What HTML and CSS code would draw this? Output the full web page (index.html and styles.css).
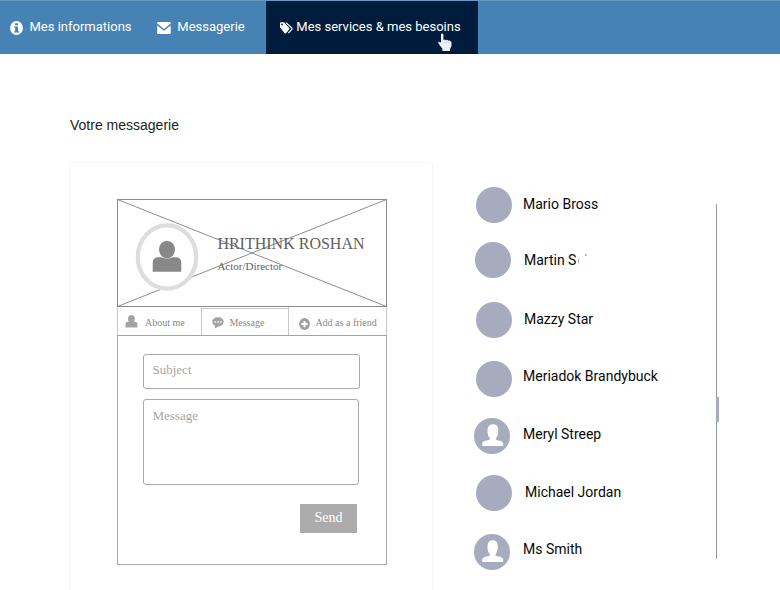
FILE: index.html
```html
<!DOCTYPE html>
<html lang="fr">
<head>
<meta charset="utf-8">
<title>Votre messagerie</title>
<link rel="stylesheet" href="styles.css">
</head>
<body>
<nav class="nav">
  <a class="tab tab-info"><svg width="13" height="14" viewBox="0 0 13 14"><ellipse cx="6.5" cy="7" rx="6.4" ry="7" fill="#fff"/><path d="M5 2.3h3v2H5zM4.2 5.4H8v4.8h1v1.4H4.2v-1.4h1V6.8h-1z" fill="#4682b4"/></svg><span>Mes informations</span></a>
  <a class="tab tab-mail"><svg width="14" height="12" viewBox="0 0 14 12"><path d="M.2 0h13.5v1.5L7 7 .2 1.5zM.2 3.4 7 8.8l6.7-5.4V12H.2z" fill="#fff"/></svg><span>Messagerie</span></a>
  <a class="tab tab-services"><svg width="13" height="12" viewBox="0 0 13 12"><path d="M0 1.2Q0 .2 1 .2H4L9.2 6q.6.7 0 1.4L6 11.2q-.7.6-1.4 0L0 5.3z" fill="#fff"/><circle cx="2" cy="2.4" r=".9" fill="#001c3d"/><path d="M6 .6 11.8 6q.7.8 0 1.500L8.400 11.200" fill="none" stroke="#fff" stroke-width="1.100"/></svg><span>Mes services &amp; mes besoins</span>
    <svg class="cursor" width="14" height="19" viewBox="0 0 14 19"><path d="M3 1.200Q4.200-.4 5.400 1.200V7l1.200-.6 1.400.8 1.300-.5 1.300 1 1.200-.1 1.700 1.500v4l-1.500 3V18H4.400v-2.200L.4 10.500V8.600l2.600.8z" fill="#edf0f4"/><path d="M6.500 7.200V10M8.800 7.500v2.800M11.200 8.500v2.200" stroke="#b4bdc9" stroke-width=".5"/></svg></a>
</nav>
<main class="page">
  <section class="mail">
    <h1>Votre messagerie</h1>
    <div class="card">
      <div class="profile">
        <header class="banner">
          <svg class="cross" width="270" height="108" viewBox="0 0 270 108"><path d="M.5.5h269v107H.5zM.5.5l269 107M.5 107.5 269.5.5" fill="none" stroke="#8c8c8c"/></svg>
          <svg class="avatar" width="64" height="70" viewBox="0 0 64 70"><ellipse cx="32" cy="35" rx="29.2" ry="31.7" fill="#fff" stroke="#ddd" stroke-width="4.2"/><ellipse cx="32" cy="27.5" rx="8" ry="8.8" fill="#888"/><path d="M17.7 49.8V41q0-5.800 5.500-5.800h3.200q5.600 2.800 11.200 0h3.200q5.500 0 5.500 5.800v8.800z" fill="#888"/></svg>
          <div class="who"><h2>HRITHINK ROSHAN</h2><p>Actor/Director</p></div>
        </header>
        <div class="actions">
          <div class="action about"><svg width="13" height="13" viewBox="0 0 13 13"><ellipse cx="6.4" cy="3.8" rx="3.4" ry="3.8" fill="#a3a3a3"/><path d="M.5 12.5V9Q.5 6.800 3 6.800h7q2.400 0 2.400 2.200v3.500z" fill="#a3a3a3"/></svg><span>About me</span></div>
          <div class="action message"><svg width="12" height="12" viewBox="0 0 12 12"><path d="M6 .2c3.200 0 5.700 2 5.700 4.600S9.200 9.400 6.300 9.400L2.800 11.600 3 8.800C1.200 8 .3 6.500.3 4.800.3 2.200 2.800.2 6 .2z" fill="#a3a3a3"/><path d="M2.500 4.200h1.600v1.500H2.500zM5.200 4.200h1.600v1.500H5.200zM7.900 4.200h1.600v1.500H7.900z" fill="#fff"/></svg><span>Message</span></div>
          <div class="action friend"><svg width="11" height="12" viewBox="0 0 11 12"><ellipse cx="5.5" cy="6" rx="5.4" ry="5.9" fill="#a0a0a0"/><path d="M4.500 3h2v2h2.100v2H6.500v2.200h-2V7H2.400V5h2.100z" fill="#fff"/></svg><span>Add as a friend</span></div>
        </div>
        <div class="form">
          <div class="field subject">Subject</div>
          <div class="field body">Message</div>
          <div class="send">Send</div>
        </div>
      </div>
    </div>
  </section>
  <aside class="contacts">
    <ul>
      <li class="r1"><i></i><span>Mario Bross</span></li>
      <li class="r2"><i></i><span>Martin S</span><svg class="smudge" width="10" height="14" viewBox="0 0 10 14"><path d="M2 5.500Q.5 8 1.800 10.500" fill="none" stroke="#aaa"/><path d="M8 1.500h1.500v1H8z" fill="#555"/></svg></li>
      <li class="r3"><i></i><span>Mazzy Star</span></li>
      <li class="r4"><i></i><span>Meriadok Brandybuck</span></li>
      <li class="r5"><i><svg width="36" height="36" viewBox="0 0 36 36"><path d="M13.500 11.500Q14 6.200 19 6.200t5.200 5.300v3.200Q23.800 18.500 22 20.200v1.300q1.300.8 3 1 4 .8 4.200 3v2.400H8.200v-2.400q.2-2.200 4.200-3 2.200-.2 3.400-1v-1.300q-1.700-1.700-2.300-5.500z" fill="#fff"/></svg></i><span>Meryl Streep</span></li>
      <li class="r6"><i></i><span>Michael Jordan</span></li>
      <li class="r7"><i><svg width="36" height="36" viewBox="0 0 36 36"><path d="M13.500 11.500Q14 6.200 18.700 6.200t5 5.300v3.200Q23.300 18.500 21.600 20.200v1.300q1.300.8 3.400 1 4 .8 4.200 3v2.400H8.200v-2.400q.2-2.200 4.200-3 2.200-.2 3.400-1v-1.300q-1.700-1.700-2.300-5.500z" fill="#fff"/></svg></i><span>Ms Smith</span></li>
    </ul>
    <div class="track"><div class="thumb"></div></div>
  </aside>
</main>
</body>
</html>
```
FILE: styles.css
```css
* { box-sizing: border-box; margin: 0; padding: 0; }
body { height: 590px; overflow: hidden; background: #fff; font-family: Roboto, sans-serif; }
svg { display: block; flex: none; }
.nav { display: flex; height: 54px; background: #4682b4; border-top: 1px solid #659ac4; color: #fff; font-size: 13px; line-height: 15px; white-space: nowrap; }
.tab { display: flex; align-items: center; padding-bottom: 2px; }
.tab svg { margin-top: 3px; }
.tab-info { width: 157px; padding-left: 9.5px; gap: 7px; }
.tab-mail { width: 109px; gap: 6.3px; }
.tab-services { position: relative; width: 212px; padding-left: 14px; gap: 3.3px; background: #001c3d; }
.tab .cursor { position: absolute; left: 172px; top: 29px; }
.page { display: flex; }
.mail { width: 363px; margin-left: 70px; }
h1 { margin-top: 63px; height: 16px; font: 14px/16px "Liberation Sans", sans-serif; color: #222; }
.card { width: 364px; height: 440px; margin: 29px 0 0 -1px; padding: 36px 45px 0 47px; border: 1px solid #f5f5f5; border-radius: 3px; }
.profile { width: 270px; height: 366px; font-family: "Liberation Serif", serif; border: 1px solid #aaa; }
.banner { position: relative; display: flex; width: 270px; height: 108px; margin: -1px; }
.cross { position: absolute; inset: 0; }
.avatar { position: relative; margin: 23px 0 0 18px; }
.who { position: relative; margin: 35px 0 0 18.4px; color: #606060; white-space: nowrap; }
h2 { font-size: 16px; line-height: 20px; font-weight: 400; }
.who p { margin-top: 6px; font-size: 11px; line-height: 13px; }
.actions { display: flex; height: 29px; margin: 1px -1px 0; border-bottom: 1px solid #a5a5a5; color: #888; font-size: 10px; white-space: nowrap; }
.action { display: flex; align-items: center; padding-top: 2px; border-left: 1px solid #c8c8c8; }
.action svg { margin-top: -2px; }
.about { width: 84px; padding-left: 7px; gap: 7px; }
.message { width: 87px; margin-top: 1px; padding: 1px 0 0 10px; gap: 5.4px; border-top: 1px solid #c8c8c8; }
.message svg { margin-top: 1px; }
.friend { width: 99px; padding-left: 10px; gap: 5.4px; border-right: 1px solid #c8c8c8; }
.friend svg { margin-top: 3px; }
.form { padding: 18px 27px 0 25px; color: #a5a5a5; font-size: 13px; line-height: 15px; }
.field { width: 216px; border: 1px solid #aaa; border-radius: 3px; }
.subject { width: 217px; height: 35px; padding: 7px 8.5px; }
.body { height: 86px; margin-top: 10px; padding: 8px 8.5px; }
.send { width: 57px; height: 29px; margin: 19px 0 0 157px; background: #ababab; color: #fff; font-size: 14px; line-height: 27px; text-align: center; }
.contacts { display: flex; margin-left: 41px; }
ul { width: 242px; padding-top: 133px; list-style: none; font-size: 14px; line-height: 18px; color: #080808; }
li { display: flex; height: 36px; white-space: nowrap; }
i { flex: none; width: 36px; height: 36px; border-radius: 50%; background: #a6abbd; }
.r1 { padding-left: 2px; }
.r1 span { margin: 8px 0 0 11px; }
.r2 { margin-top: 19px; padding-left: 1px; }
.r2 span { margin: 9px 0 0 13px; }
.smudge { margin: 11px 0 0 1px; }
.r3 { margin-top: 24px; padding-left: 2px; }
.r3 span { margin: 8px 0 0 12px; }
.r4 { margin-top: 23px; padding-left: 2px; }
.r4 span { margin: 6px 0 0 11px; }
.r5 { margin-top: 21px; }
.r5 span { margin: 7px 0 0 13px; }
.r6 { margin-top: 21px; padding-left: 2px; }
.r6 span { margin: 8px 0 0 13px; }
.r7 { margin-top: 23px; }
.r7 span { margin: 6px 0 0 13px; }
.track { display: flex; width: 1px; height: 355px; margin-top: 150px; background: #9498a4; }
.thumb { flex: none; width: 3px; height: 25px; margin-top: 193px; background: #a6abbd; }
```
